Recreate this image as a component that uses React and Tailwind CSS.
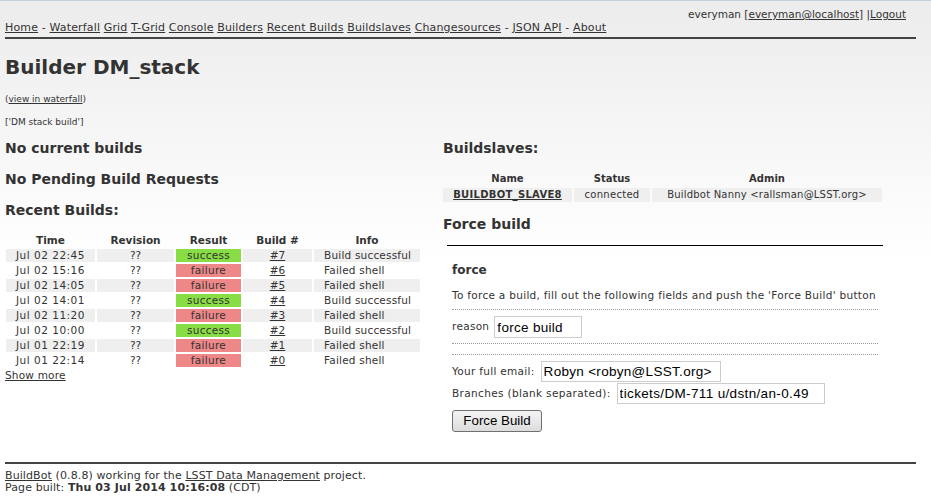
import React from "react";

const builds = [
  { time: "Jul 02 22:45", ok: true, num: "#7", info: "Build successful" },
  { time: "Jul 02 15:16", ok: false, num: "#6", info: "Failed shell" },
  { time: "Jul 02 14:05", ok: false, num: "#5", info: "Failed shell" },
  { time: "Jul 02 14:01", ok: true, num: "#4", info: "Build successful" },
  { time: "Jul 02 11:20", ok: false, num: "#3", info: "Failed shell" },
  { time: "Jul 02 10:00", ok: true, num: "#2", info: "Build successful" },
  { time: "Jul 01 22:19", ok: false, num: "#1", info: "Failed shell" },
  { time: "Jul 01 22:14", ok: false, num: "#0", info: "Failed shell" },
];

const navLinks = [
  ["Home", true],
  ["Waterfall", false],
  ["Grid", false],
  ["T-Grid", false],
  ["Console", false],
  ["Builders", false],
  ["Recent Builds", false],
  ["Buildslaves", false],
  ["Changesources", true],
  ["JSON API", true],
  ["About", false],
];

const A = ({ children, className = "" }) => (
  <a href="#" className={"underline text-[#333] " + className}>
    {children}
  </a>
);

const arial = { fontFamily: '"Liberation Sans", Arial, sans-serif' };

const App = () => {
  return (
    <div
      className="w-[931px] h-[498px] overflow-hidden text-[#333] bg-[linear-gradient(to_bottom,#ececec_0px,#ffffff_260px)]"
      style={{ fontFamily: '"DejaVu Sans", Verdana, sans-serif' }}
    >
      <div className="h-px bg-[#c3cfdc]" />

      <div className="pl-[5px] pr-[15px]">
        {/* user line */}
        <div className="flex justify-end pr-[10px] pt-[6px] h-[16px] text-[10.5px] leading-[14px]">
          <span>
            everyman [<A>everyman@localhost</A>] |<A>Logout</A>
          </span>
        </div>

        {/* nav */}
        <div className="mt-[4px] text-[11px] leading-[14px] tracking-[0.15px] pb-[2px] border-b-2 border-[#444]">
          {navLinks.map(([label, dash], i) => (
            <span key={i}>
              <A>{label}</A>
              {dash ? " - " : " "}
            </span>
          ))}
        </div>

        <h1 className="mt-[16px] text-[20px] leading-[24px] font-bold">Builder DM_stack</h1>

        <p className="mt-[14px] text-[9px] leading-[12px]">
          (<A>view in waterfall</A>)
        </p>
        <p className="mt-[11px] text-[9px] leading-[12px]">['DM stack build']</p>

        <div className="flex mt-[11px]">
          {/* left column */}
          <div className="w-[438px]">
            <h2 className="text-[14px] leading-[18px] font-bold">No current builds</h2>
            <h2 className="mt-[13px] text-[14px] leading-[18px] font-bold">No Pending Build Requests</h2>
            <h2 className="mt-[13px] text-[14px] leading-[18px] font-bold">Recent Builds:</h2>

            <div className="mt-[15px] text-[10.5px] text-center">
              <div className="flex gap-[2px] font-bold leading-[13px] h-[15px] pl-px">
                <div className="w-[89px]">Time</div>
                <div className="w-[77px]">Revision</div>
                <div className="w-[65px]">Result</div>
                <div className="w-[69px]">Build #</div>
                <div className="w-[106px]">Info</div>
              </div>
              <div className="flex flex-col gap-[2px] pl-px">
                {builds.map((b, i) => {
                  const bg = i % 2 === 0 ? "bg-[#efefef]" : "";
                  return (
                    <div key={i} className="flex gap-[2px] h-[13px] leading-[13px]">
                      <div className={"w-[89px] tracking-[0.5px] " + bg}>{b.time}</div>
                      <div className={"w-[77px] " + bg}>??</div>
                      <div className={"w-[65px] tracking-[0.3px] " + (b.ok ? "bg-[#88dd44]" : "bg-[#ee8888]")}>
                        {b.ok ? "success" : "failure"}
                      </div>
                      <div className={"w-[69px] " + bg}>
                        <A>{b.num}</A>
                      </div>
                      <div className={"w-[106px] text-left pl-[10px] tracking-[0.2px] " + bg}>{b.info}</div>
                    </div>
                  );
                })}
              </div>
              <div className="text-left text-[10.5px] leading-[13px] mt-[2px] tracking-[0.2px]">
                <A>Show more</A>
              </div>
            </div>
          </div>

          {/* right column */}
          <div className="w-[445px]">
            <h2 className="text-[14px] leading-[18px] font-bold">Buildslaves:</h2>

            <div className="mt-[15px] text-[10px] text-center">
              <div className="flex gap-[2px] font-bold h-[16px] leading-[13px]">
                <div className="w-[129px]">Name</div>
                <div className="w-[76px]">Status</div>
                <div className="w-[230px]">Admin</div>
              </div>
              <div className="flex gap-[2px] h-[14px] leading-[14px]">
                <div className="w-[129px] bg-[#efefef] font-bold tracking-[0.3px]">
                  <A>BUILDBOT_SLAVE8</A>
                </div>
                <div className="w-[76px] bg-[#efefef] tracking-[0.3px]">connected</div>
                <div className="w-[230px] bg-[#efefef] tracking-[0.2px]">Buildbot Nanny &lt;rallsman@LSST.org&gt;</div>
              </div>
            </div>

            <h2 className="mt-[13px] text-[14px] leading-[18px] font-bold">Force build</h2>

            <div className="ml-[4px] w-[436px] mt-[12px] border-t border-black">
              <div className="pl-[5px] pr-[5px]">
                <h3 className="mt-[17px] text-[12px] leading-[15px] font-bold">force</h3>
                <p className="mt-[11px] text-[10.5px] leading-[12px] tracking-[0.3px] whitespace-nowrap">
                  To force a build, fill out the following fields and push the 'Force Build' button
                </p>
                <div className="mt-[8px] border-t border-dotted border-[#999]" />
                <div className="mt-[6px] flex items-center gap-[5px] text-[10.5px] tracking-[0.3px]">
                  <span>reason</span>
                  <input
                    readOnly
                    value="force build"
                    className="w-[88px] h-[22px] px-[2px] border border-[#ccc] bg-white text-[13.5px] text-black outline-none"
                    style={arial}
                  />
                </div>
                <div className="mt-[5px] border-t border-dotted border-[#999]" />
                <div className="mt-[10px] border-t border-dotted border-[#999]" />
                <div className="mt-[6px] flex items-center gap-[6px] text-[10.5px] tracking-[0.3px]">
                  <span>Your full email:</span>
                  <input
                    readOnly
                    value="Robyn <robyn@LSST.org>"
                    className="w-[180px] h-[21px] px-[2px] border border-[#ccc] bg-white text-[13.5px] text-black outline-none"
                    style={arial}
                  />
                </div>
                <div className="mt-px flex items-center gap-[6px] text-[10.5px] tracking-[0.35px]">
                  <span>Branches (blank separated):</span>
                  <input
                    readOnly
                    value="tickets/DM-711 u/dstn/an-0.49"
                    className="w-[208px] h-[21px] px-[2px] border border-[#ccc] bg-white text-[13.5px] text-black outline-none"
                    style={arial}
                  />
                </div>
                <button
                  className="mt-[6px] w-[90px] h-[22px] rounded-[3px] border border-[#707070] bg-[linear-gradient(to_bottom,#f4f4f4,#dcdcdc)] text-[13.3px] text-black"
                  style={arial}
                >
                  Force Build
                </button>
              </div>
            </div>
          </div>
        </div>

        {/* footer */}
        <div className="mt-[30px] border-t-2 border-[#444] pt-[6px] text-[11px] leading-[12px] tracking-[0.1px]">
          <div>
            <A>BuildBot</A> (0.8.8) working for the <A>LSST Data Management</A> project.
          </div>
          <div>
            Page built: <b>Thu 03 Jul 2014 10:16:08</b> (CDT)
          </div>
        </div>
      </div>
    </div>
  );
};

export default App;
